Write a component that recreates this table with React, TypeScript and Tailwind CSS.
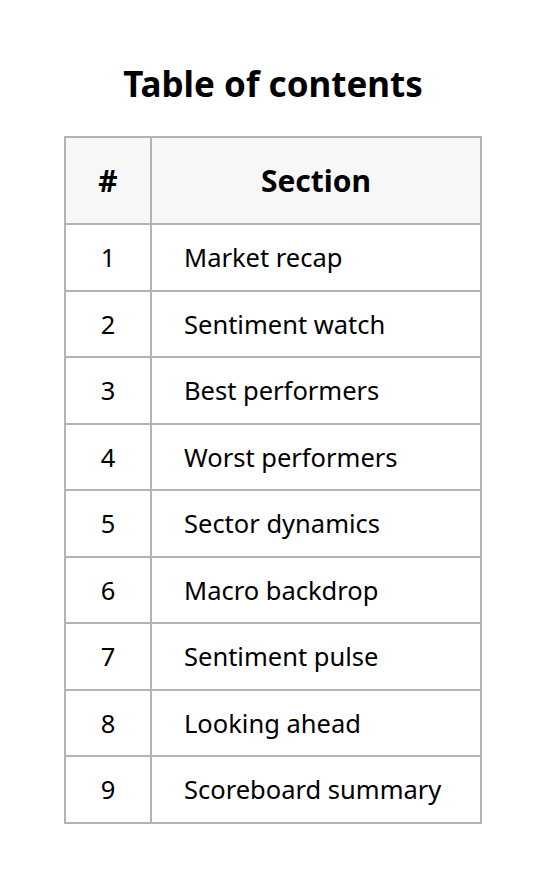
const SECTIONS = [
  'Market recap',
  'Sentiment watch',
  'Best performers',
  'Worst performers',
  'Sector dynamics',
  'Macro backdrop',
  'Sentiment pulse',
  'Looking ahead',
  'Scoreboard summary',
];

export default function App() {
  return (
    <div className="min-h-[880px] bg-white text-black font-['Noto_Sans',sans-serif] flex flex-col items-center pt-[60px]">
      <h1 className="text-[35px] font-bold leading-[48px]">Table of contents</h1>
      <table className="mt-[28px] w-[418px] border-collapse border-2 border-[#b3b3b3]">
        <thead>
          <tr className="bg-[#f7f7f7]">
            <th className="w-[86px] h-[87px] border-2 border-[#b3b3b3] text-[30px] font-bold text-center">#</th>
            <th className="h-[87px] border-2 border-[#b3b3b3] text-[30px] font-bold text-center">Section</th>
          </tr>
        </thead>
        <tbody>
          {SECTIONS.map((s, i) => (
            <tr key={s}>
              <td className="h-[66.5px] border-2 border-[#b3b3b3] text-[25.5px] text-center">{i + 1}</td>
              <td className="h-[66.5px] border-2 border-[#b3b3b3] text-[25.5px] pl-[32px]">{s}</td>
            </tr>
          ))}
        </tbody>
      </table>
    </div>
  );
}
